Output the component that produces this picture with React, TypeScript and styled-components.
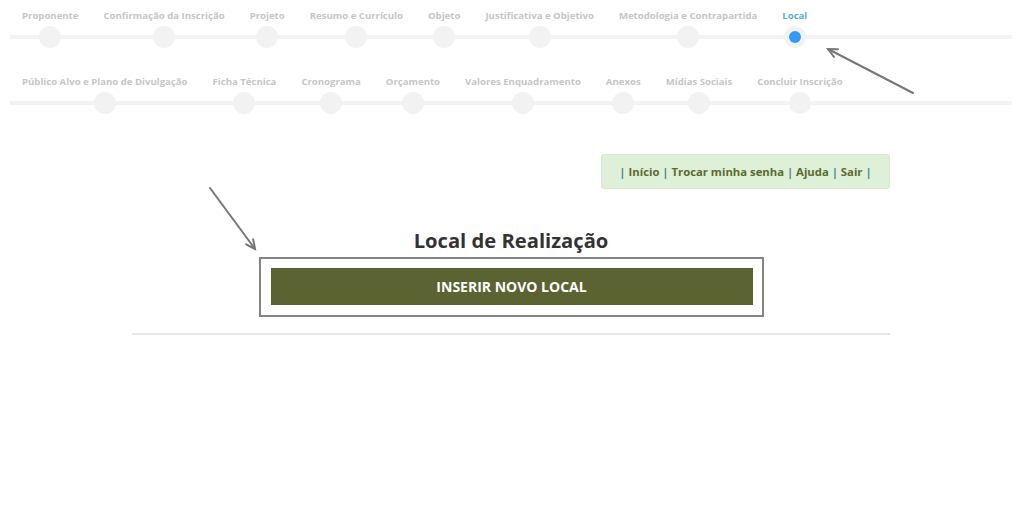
import React from "react";
import styled, { createGlobalStyle } from "styled-components";

const Global = createGlobalStyle`
  html, body { margin: 0; padding: 0; background: #fff; }
  body { font-family: "Open Sans", "Liberation Sans", sans-serif; }
  * { box-sizing: border-box; }
`;

const Page = styled.div`
  position: relative;
  width: 1024px;
  height: 505px;
  overflow: hidden;
`;

const Stepper = styled.div`
  display: flex;
  flex-direction: column;
`;

const StepRow = styled.div`
  display: flex;
  gap: 25px;
  margin: 0 12px 0 10px;
  padding: 9px 0 18px 12px;
  background: linear-gradient(#f3f3f3, #f3f3f3) no-repeat 0 35px / 100% 4px;
`;

const Step = styled.div`
  display: flex;
  flex-direction: column;
  align-items: center;
`;

const StepLabel = styled.span<{ $active?: boolean }>`
  font-size: 9.6px;
  line-height: 14px;
  font-weight: 700;
  white-space: nowrap;
  color: ${(p) => (p.$active ? "#5aaede" : "#c6c6c6")};
`;

const Dot = styled.span<{ $active?: boolean }>`
  margin-top: 3px;
  width: 22px;
  height: 22px;
  border-radius: 50%;
  background: #f2f2f2;
  display: flex;
  align-items: center;
  justify-content: center;
  &::after {
    content: "";
    display: ${(p) => (p.$active ? "block" : "none")};
    width: 12px;
    height: 12px;
    border-radius: 50%;
    background: #3399ff;
  }
`;

const Main = styled.div`
  width: 758px;
  margin: 0 0 0 132px;
  padding-top: 22px;
  display: flex;
  flex-direction: column;
  align-items: center;
`;

const NavBox = styled.div`
  align-self: flex-end;
  width: 289px;
  height: 35px;
  background: #dff0d8;
  border: 1px solid #d6e9c6;
  border-radius: 3px;
  display: flex;
  align-items: center;
  justify-content: center;
`;

const NavText = styled.span`
  white-space: nowrap;
  font-size: 11.3px;
  font-weight: 700;
  color: #5a6b2f;
`;

const Sep = styled.span`
  color: #3d8a8a;
`;

const Title = styled.h2`
  margin: 38px 0 3px;
  font-size: 20.2px;
  line-height: 27px;
  font-weight: 700;
  color: #333;
`;

const Frame = styled.div`
  width: 505px;
  border: 2px solid #858585;
  padding: 9px 9px 10px 10px;
`;

const InsertButton = styled.button`
  display: block;
  width: 100%;
  height: 37px;
  border: 0;
  background: #5b6332;
  color: #fff;
  font-family: "Open Sans", "Liberation Sans", sans-serif;
  font-size: 14px;
  font-weight: 700;
  cursor: pointer;
`;

const Rule = styled.hr`
  width: 100%;
  margin: 16px 0 0;
  border: 0;
  height: 2px;
  background: #e6e6e2;
`;

const Arrows = styled.svg`
  position: absolute;
  inset: 0;
  pointer-events: none;
`;

const row1 = [
  "Proponente",
  "Confirmação da Inscrição",
  "Projeto",
  "Resumo e Currículo",
  "Objeto",
  "Justificativa e Objetivo",
  "Metodologia e Contrapartida",
  "Local",
];
const row2 = [
  "Público Alvo e Plano de Divulgação",
  "Ficha Técnica",
  "Cronograma",
  "Orçamento",
  "Valores Enquadramento",
  "Anexos",
  "Mídias Sociais",
  "Concluir Inscrição",
];

const Arrow = ({ x1, y1, x2, y2 }: { x1: number; y1: number; x2: number; y2: number }) => {
  const a = Math.atan2(y2 - y1, x2 - x1);
  const L = 10;
  const w = 0.45;
  const p1 = [x2 - L * Math.cos(a - w), y2 - L * Math.sin(a - w)];
  const p2 = [x2 - L * Math.cos(a + w), y2 - L * Math.sin(a + w)];
  return (
    <g stroke="#777" strokeWidth={2} fill="none" strokeLinecap="round">
      <line x1={x1} y1={y1} x2={x2} y2={y2} />
      <polyline points={`${p1[0]},${p1[1]} ${x2},${y2} ${p2[0]},${p2[1]}`} />
    </g>
  );
};

const links = ["Início", "Trocar minha senha", "Ajuda", "Sair"];

export default function App() {
  return (
    <Page>
      <Global />
      <Stepper>
        <StepRow>
          {row1.map((s) => (
            <Step key={s}>
              <StepLabel $active={s === "Local"}>{s}</StepLabel>
              <Dot $active={s === "Local"} />
            </Step>
          ))}
        </StepRow>
        <StepRow>
          {row2.map((s) => (
            <Step key={s}>
              <StepLabel>{s}</StepLabel>
              <Dot />
            </Step>
          ))}
        </StepRow>
      </Stepper>
      <Main>
        <NavBox>
          <NavText>
            <Sep>|</Sep>
            {links.map((l) => (
              <React.Fragment key={l}>
                {" "}{l}{" "}<Sep>|</Sep>
              </React.Fragment>
            ))}
          </NavText>
        </NavBox>
        <Title>Local de Realização</Title>
        <Frame>
          <InsertButton>INSERIR NOVO LOCAL</InsertButton>
        </Frame>
        <Rule />
      </Main>
      <Arrows width="1024" height="505" viewBox="0 0 1024 505">
        <Arrow x1={210} y1={188} x2={255} y2={249} />
        <Arrow x1={913} y1={93} x2={828} y2={49} />
      </Arrows>
    </Page>
  );
}
